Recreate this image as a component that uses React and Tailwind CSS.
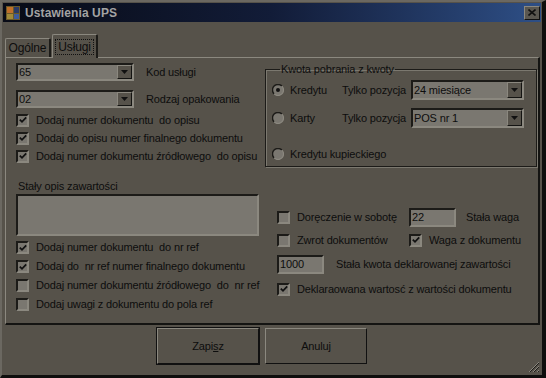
import React from 'react'

const sunken =
  'border-2 border-t-[#1c1b18] border-l-[#1c1b18] border-r-[#8b887f] border-b-[#8b887f] bg-[#7a7770]'
const raised =
  'border border-t-[#8b887f] border-l-[#8b887f] border-r-[#141412] border-b-[#141412] bg-[#56524a]'

function Check({ checked }) {
  return (
    <span className={`w-[13px] h-[13px] shrink-0 flex items-center justify-center ${sunken}`}>
      {checked && (
        <svg width="8" height="8" viewBox="0 0 8 8">
          <polyline points="0.8,3.6 3,5.8 7.2,1.4" fill="none" stroke="#111" strokeWidth="1.8" />
        </svg>
      )}
    </span>
  )
}

function CheckRow({ checked, label, h = 'h-[18px]' }) {
  return (
    <div className={`flex items-center gap-[7px] ${h}`}>
      <Check checked={checked} />
      <span className="whitespace-pre">{label}</span>
    </div>
  )
}

function Radio({ on }) {
  return (
    <svg width="12" height="12" viewBox="0 0 12 12" className="shrink-0">
      <circle cx="6" cy="6" r="5.5" fill="#7a7770" />
      <path d="M2.1 9.9 A5.5 5.5 0 0 1 9.9 2.1" fill="none" stroke="#1c1b18" strokeWidth="1.4" />
      <path d="M9.9 2.1 A5.5 5.5 0 0 1 2.1 9.9" fill="none" stroke="#8b887f" strokeWidth="1.2" />
      {on && <circle cx="6" cy="6" r="2" fill="#111" />}
    </svg>
  )
}

function Combo({ value, w, h = 'h-[18px]' }) {
  return (
    <div className={`flex items-stretch ${w} ${h} ${sunken}`}>
      <span className="flex-1 pl-[1px] leading-none flex items-center">{value}</span>
      <span className={`w-[15px] flex items-center justify-center ${raised}`}>
        <svg width="7" height="4" viewBox="0 0 7 4">
          <path d="M0 0 H7 L3.5 4 Z" fill="#111" />
        </svg>
      </span>
    </div>
  )
}

function TextBox({ value, w, h }) {
  return <div className={`${w} ${h} pl-[1px] flex items-center ${sunken}`}>{value}</div>
}

function Button({ children, isDefault }) {
  return (
    <button
      className={`w-[102px] h-[36px] flex items-center justify-center border border-t-[#8b887f] border-l-[#8b887f] border-r-[#111] border-b-[#111] ${
        isDefault ? 'outline outline-1 outline-[#111]' : ''
      }`}
    >
      {children}
    </button>
  )
}

export default function App() {
  return (
    <div className="w-[546px] h-[378px] bg-[#56524a] border-l-2 border-t-2 border-l-[#6b6861] border-t-[#6b6861] border-r-[4px] border-b-[3px] border-r-[#0e0e0d] border-b-[#0e0e0d] font-['Liberation_Sans',Arial,sans-serif] text-[11px] tracking-[-0.15px] text-[#0d0d0d] overflow-hidden">
      <div className="p-[1px] h-full flex flex-col">
        {/* title bar */}
        <div className="h-[19px] flex items-center bg-linear-to-r from-[#080b16] via-[#121c38] to-[#2e4f86]">
          <svg width="14" height="14" viewBox="0 0 14 14" className="ml-[3px]">
            <rect x="0" y="0" width="14" height="14" fill="#6b5a2a" />
            <rect x="1" y="1" width="6" height="6" fill="#c0702a" />
            <rect x="8" y="1" width="5" height="6" fill="#2b3b66" />
            <rect x="1" y="8" width="6" height="5" fill="#a08a3a" />
            <rect x="8" y="8" width="5" height="5" fill="#3d5c9c" />
          </svg>
          <span className="ml-[5px] font-bold text-[12px] text-[#a3a3a3] tracking-[0.1px]">Ustawienia UPS</span>
          <span className="ml-auto mr-[1px] w-[16px] h-[14px] flex items-center justify-center border border-t-[#8b887f] border-l-[#8b887f] border-r-[#111] border-b-[#111] bg-[#5a5750]">
            <svg width="8" height="7" viewBox="0 0 8 7">
              <path d="M0.5 0.5 L7.5 6.5 M7.5 0.5 L0.5 6.5" stroke="#111" strokeWidth="1.6" />
            </svg>
          </span>
        </div>

        {/* tabs */}
        <div className="mt-[12px] h-[23px] flex items-end pl-[2px]">
          <div className="w-[46px] h-[19px] flex items-center justify-center border-t border-l border-r-2 border-t-[#8b887f] border-l-[#8b887f] border-r-[#1c1b18] rounded-t-[2px] text-[12px]">
            Ogólne
          </div>
          <div className="ml-[1px] w-[46px] h-[24px] -mb-[1px] flex items-center justify-center border-t border-l border-r-2 border-t-[#8b887f] border-l-[#8b887f] border-r-[#1c1b18] rounded-t-[2px] bg-[#56524a] relative text-[12px]">
            <span className="px-[2px] border border-dotted border-[#111] leading-[14px]">Usługi</span>
          </div>
        </div>

        {/* panel */}
        <div className="ml-[2px] w-[535px] h-[268px] border-t border-l border-r-2 border-b-2 border-t-[#8b887f] border-l-[#8b887f] border-r-[#141412] border-b-[#141412] flex pl-[10px]">
          {/* left column */}
          <div className="w-[249px] shrink-0 pt-[5px] flex flex-col">
            <div className="flex items-center h-[18px]">
              <Combo value="65" w="w-[118px]" />
              <span className="ml-[12px]">Kod usługi</span>
            </div>
            <div className="flex items-center h-[18px] mt-[9px]">
              <Combo value="02" w="w-[118px]" />
              <span className="ml-[12px]">Rodzaj opakowania</span>
            </div>
            <div className="mt-[3px]">
              <CheckRow checked label="Dodaj numer dokumentu  do opisu" />
              <CheckRow checked label="Dodaj do opisu numer finalnego dokumentu" />
              <CheckRow checked label="Dodaj numer dokumentu źródłowego  do opisu" />
            </div>
            <div className="mt-[14px] h-[14px] ml-[2px] flex items-center">Stały opis zawartości</div>
            <div className={`mt-[1px] w-[243px] h-[42px] ${sunken}`} />
            <div className="mt-[2px]">
              <CheckRow checked label="Dodaj numer dokumentu  do nr ref" h="h-[19px]" />
              <CheckRow checked label="Dodaj do  nr ref numer finalnego dokumentu" h="h-[19px]" />
              <CheckRow label="Dodaj numer dokumentu źródłowego  do  nr ref" h="h-[19px]" />
              <CheckRow label="Dodaj uwagi z dokumentu do pola ref" h="h-[19px]" />
            </div>
          </div>

          {/* right column */}
          <div className="w-[272px] shrink-0 flex flex-col">
            <fieldset className="mt-[5px] w-[272px] h-[104px] border border-[#1c1b18] shadow-[inset_1px_1px_0_#7b786f,1px_1px_0_#7b786f] pl-[6px] flex flex-col">
              <legend className="ml-[8px] px-[1px] leading-[13px]">Kwota pobrania z kwoty</legend>
              <div className="mt-[4px] h-[20px] flex items-center">
                <div className="w-[70px] flex items-center gap-[6px]">
                  <Radio on />
                  <span>Kredytu</span>
                </div>
                <span className="w-[69px]">Tylko pozycja</span>
                <Combo value="24 miesiące" w="w-[113px]" h="h-[20px]" />
              </div>
              <div className="mt-[8px] h-[20px] flex items-center">
                <div className="w-[70px] flex items-center gap-[6px]">
                  <Radio />
                  <span>Karty</span>
                </div>
                <span className="w-[69px]">Tylko pozycja</span>
                <Combo value="POS nr 1" w="w-[113px]" h="h-[20px]" />
              </div>
              <div className="mt-[16px] h-[20px] flex items-center gap-[6px]">
                <Radio />
                <span>Kredytu kupieckiego</span>
              </div>
            </fieldset>

            <div className="mt-[41px] pl-[12px] h-[19px] flex items-center">
              <div className="w-[132px]">
                <CheckRow label="Doręczenie w sobotę" />
              </div>
              <TextBox value="22" w="w-[47px]" h="h-[19px]" />
              <span className="ml-[10px]">Stała waga</span>
            </div>
            <div className="mt-[4px] pl-[12px] h-[18px] flex items-center">
              <div className="w-[132px]">
                <CheckRow label="Zwrot dokumentów" />
              </div>
              <CheckRow checked label="Waga z dokumentu" />
            </div>
            <div className="mt-[6px] pl-[12px] h-[19px] flex items-center">
              <TextBox value="1000" w="w-[47px]" h="h-[19px]" />
              <span className="ml-[12px]">Stała kwota deklarowanej zawartości</span>
            </div>
            <div className="mt-[6px] pl-[12px]">
              <CheckRow checked label="Deklaraowana wartosć z wartości dokumentu" />
            </div>
          </div>
        </div>

        {/* buttons */}
        <div className="flex-1 flex pl-[154px] pt-[3px]">
          <div className="flex gap-[6px] h-[36px]">
            <Button isDefault>
              Zapi<span className="underline">s</span>z
            </Button>
            <Button>Anuluj</Button>
          </div>
          <svg width="12" height="12" viewBox="0 0 12 12" className="ml-auto self-end mr-[1px] mb-[1px]">
            <path d="M11 1 L1 11 M11 5 L5 11 M11 9 L9 11" stroke="#8b887f" strokeWidth="1" />
            <path d="M11 2 L2 11 M11 6 L6 11 M11 10 L10 11" stroke="#1c1b18" strokeWidth="1" />
          </svg>
        </div>
      </div>
    </div>
  )
}
